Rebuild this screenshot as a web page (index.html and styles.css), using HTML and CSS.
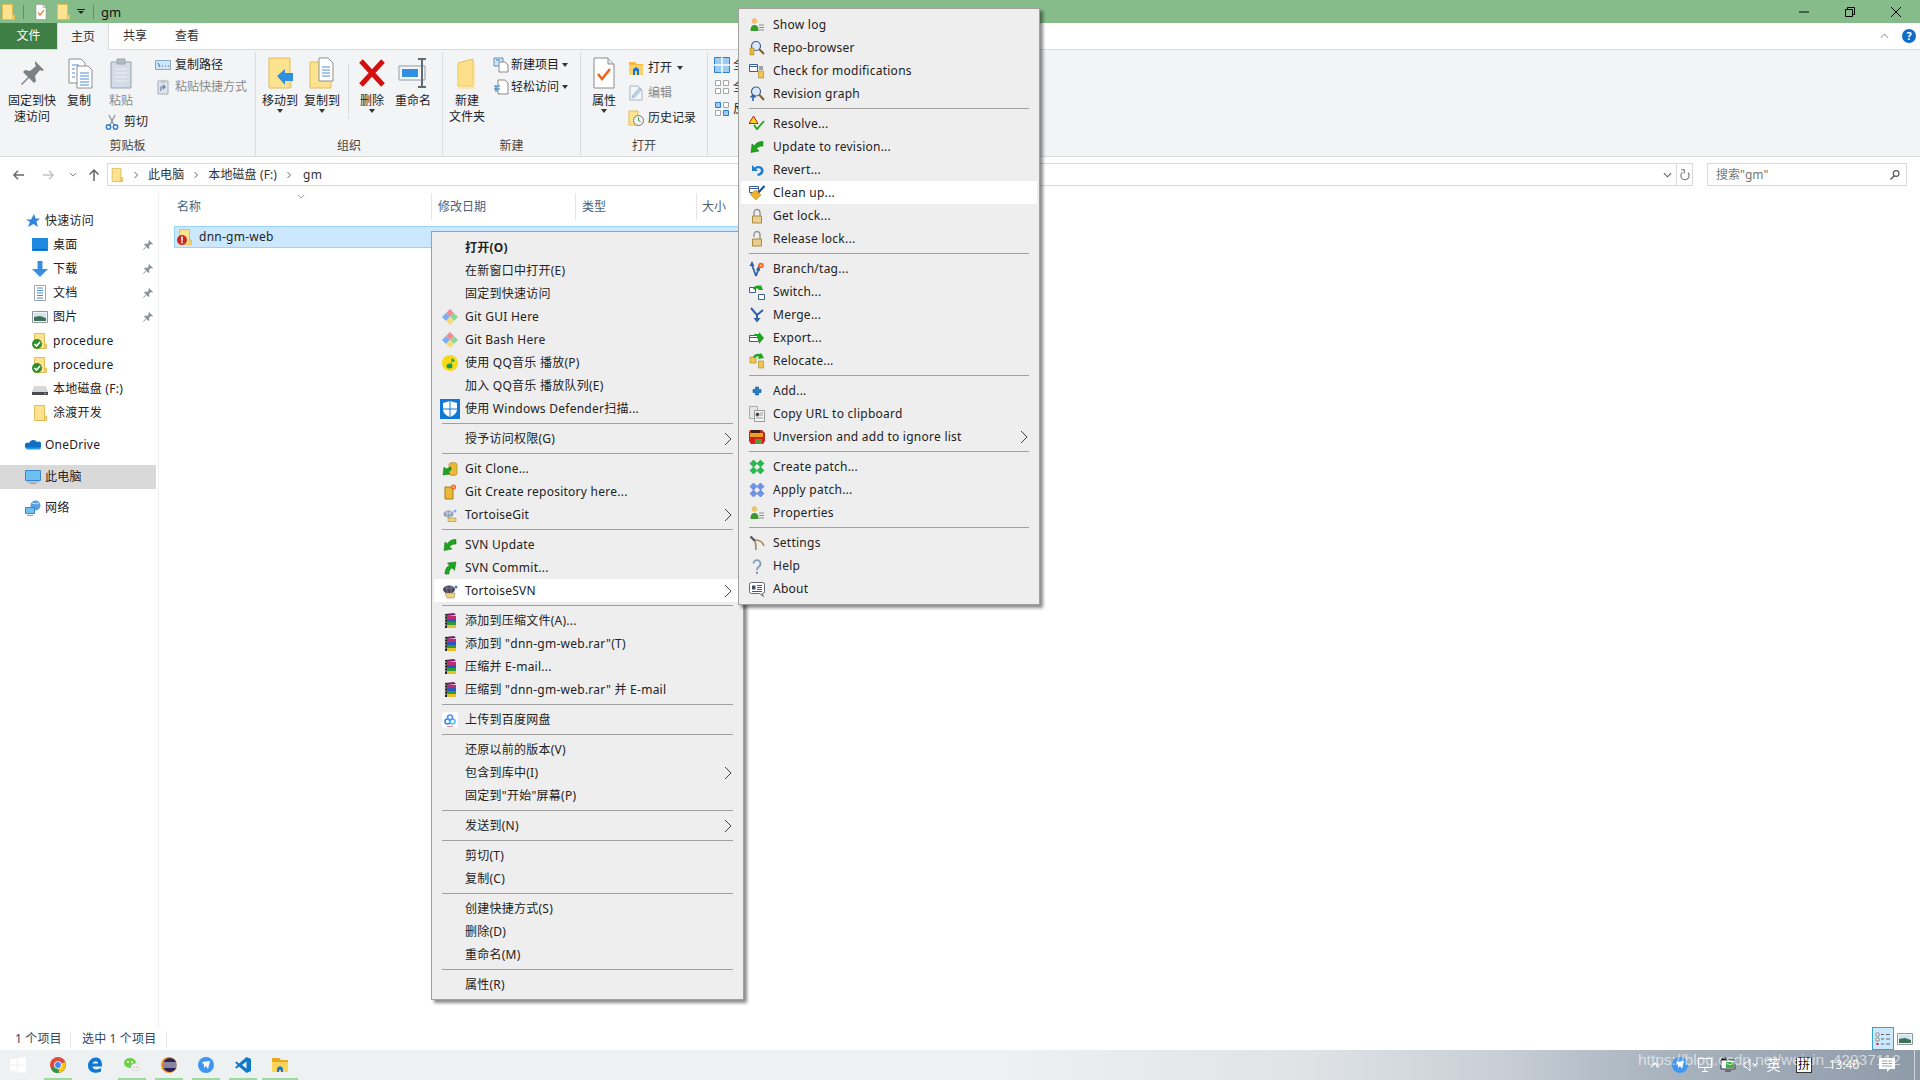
FILE: index.html
```html
<!DOCTYPE html>
<html lang="zh-CN">
<head>
<meta charset="utf-8">
<title>gm</title>
<link rel="stylesheet" href="styles.css">
</head>
<body>
<svg class="sprite" xmlns="http://www.w3.org/2000/svg">
<symbol id="folder" viewBox="0 0 16 16"><path d="M2.5.5h10v15h-10z" fill="#fde38f" stroke="#e2bd58"/><path d="M12.5 11h2v4.5h-2z" fill="#f9d776" stroke="#e2bd58"/></symbol>
<symbol id="ok" viewBox="0 0 16 16"><circle cx="5" cy="11" r="5" fill="#2f8f2f"/><path d="M2.5 11l2 2 3.5-4" fill="none" stroke="#fff" stroke-width="1.6"/></symbol>
<symbol id="err" viewBox="0 0 16 16"><circle cx="5" cy="11" r="5" fill="#c8281e"/><path d="M4.2 7.6h1.6v4.2H4.2zM4.2 12.6h1.6v1.6H4.2z" fill="#fff"/></symbol>
<symbol id="doc-check" viewBox="0 0 32 32"><path d="M6 1h14l6 6v24H6z" fill="#fff" stroke="#8a8a8a"/><path d="M20 1v6h6" fill="#e8e8e8" stroke="#8a8a8a"/><path d="M10 17l4 5 8-10" fill="none" stroke="#e8641b" stroke-width="2.4"/></symbol>
<symbol id="pin" viewBox="0 0 32 32"><path d="M19 4l9 9-2 1-2-1-5 6 1 5-2 2-5-5-7 7-1-1 7-7-5-5 2-2 5 1 6-5-1-2z" fill="#7c8186"/></symbol>
<symbol id="copy" viewBox="0 0 32 32"><path d="M6 2h12l4 4v20H6z" fill="#fff" stroke="#8f8f8f"/><path d="M14 9h11l4 4v18H14z" fill="#fff" stroke="#8f8f8f"/><path d="M9 8h7M9 12h3M9 16h3M9 20h3M17 16h9M17 19h9M17 22h9M17 25h9M17 28h9" stroke="#4d8ed4" stroke-width="1.2"/></symbol>
<symbol id="paste" viewBox="0 0 32 32"><path d="M6 5h20v26H6z" fill="#d3dbe6" stroke="#9aa3ad"/><path d="M12 2h8v5h-8z" fill="#b3bcc6" stroke="#9aa3ad"/><path d="M10 12h12M10 16h12M10 20h12M10 24h12" stroke="#eef1f4"/></symbol>
<symbol id="path" viewBox="0 0 16 16"><path d="M.5 3.5h15v9H.5z" fill="#cfe5f8" stroke="#89a8c4"/><path d="M3 6l2 4M7 9h1M10 9h1M13 9h1" stroke="#45617d"/></symbol>
<symbol id="shortcut" viewBox="0 0 16 16"><path d="M3 2h10v13H3z" fill="#dfe4ea" stroke="#a8b0ba"/><path d="M6 .8h4v3H6z" fill="#bcc4cc"/><path d="M6 12V8h4M8 6l2 2-2 2" fill="none" stroke="#5e7fa8" stroke-width="1.2"/></symbol>
<symbol id="cut" viewBox="0 0 16 16"><path d="M5 1l5 10M11 1L6 11" stroke="#8d9297" stroke-width="1.2"/><circle cx="4.5" cy="13" r="2.2" fill="none" stroke="#2d7fd0" stroke-width="1.4"/><circle cx="11.5" cy="13" r="2.2" fill="none" stroke="#2d7fd0" stroke-width="1.4"/></symbol>
<symbol id="move" viewBox="0 0 32 32"><path d="M5 1h21v30H5z" fill="#fde38f" stroke="#e2bd58"/><path d="M26 20h2v11h-2z" fill="#f9d776"/><path d="M13 19l8-7v4h8v8h-8v4z" fill="#2f8fe0"/></symbol>
<symbol id="copyto" viewBox="0 0 32 32"><path d="M4 5h21v26H4z" fill="#fde38f" stroke="#e2bd58"/><path d="M13 1h9l5 5v18H13z" fill="#fff" stroke="#8f8f8f"/><path d="M16 10h8M16 13h8M16 16h8M16 19h8" stroke="#4d8ed4"/></symbol>
<symbol id="del" viewBox="0 0 32 32"><path d="M5 4l22 24M27 4L5 28" stroke="#d30f0f" stroke-width="5"/></symbol>
<symbol id="rename" viewBox="0 0 32 32"><path d="M2 9h26v14H2z" fill="#f4f6f8" stroke="#8f99a3"/><path d="M5 12h16v8H5z" fill="#2f8fe0"/><path d="M25 3v26M21 2h8M21 30h8" stroke="#5f6a75" stroke-width="2"/></symbol>
<symbol id="newfolder" viewBox="0 0 32 32"><path d="M7 6l15-4v27H7z" fill="#fde38f" stroke="#e2bd58"/><path d="M7 6h17v26H7z" fill="#fbdc82" opacity=".5"/></symbol>
<symbol id="newitem" viewBox="0 0 16 16"><path d="M1 1h9v8H1z" fill="#cfe5f8" stroke="#6d8fae"/><path d="M6 5h6l3 3v7H6z" fill="#fff" stroke="#888"/><path d="M3 3h4" stroke="#2d7fd0"/></symbol>
<symbol id="easy" viewBox="0 0 16 16"><path d="M5 1h7l3 3v11H5z" fill="#fff" stroke="#888"/><path d="M1 7h6M1 10h6M3 7v6" stroke="#2d7fd0" stroke-width="1.2"/></symbol>
<symbol id="open" viewBox="0 0 16 16"><path d="M1 2h6l2 2h6v4H1z" fill="#f6b73c"/><path d="M1 5h14v10H1z" fill="#fbd36c"/><path d="M5 15V9l3-2 3 2v6H9v-4H7v4z" fill="#1678d2"/></symbol>
<symbol id="edit" viewBox="0 0 16 16"><path d="M2 1h8l4 4v10H2z" fill="#f4f6f8" stroke="#a9b4bf"/><path d="M4 13l1-3 6-7 2 2-6 7z" fill="#bcd2e8" stroke="#8ba7c2" stroke-width=".6"/></symbol>
<symbol id="history" viewBox="0 0 16 16"><path d="M1 1h9v14H1z" fill="#fde38f" stroke="#e2bd58"/><circle cx="10.5" cy="10.5" r="5" fill="#f2f2f2" stroke="#6f7f6f"/><path d="M10.5 7.5v3l2 1" fill="none" stroke="#3d8a3d"/></symbol>
<symbol id="selall" viewBox="0 0 16 16"><path d="M.5.5h15v15H.5z" fill="#9ecbf2" stroke="#2d7fd0"/><path d="M8 0v16M0 8h16" stroke="#fff" stroke-width="1.4"/></symbol>
<symbol id="selnone" viewBox="0 0 16 16"><path d="M1.500 1.500h5v5h-5zM9.500 1.500h5v5h-5zM1.500 9.500h5v5h-5zM9.500 9.500h5v5h-5z" fill="#fff" stroke="#a5a5a5"/></symbol>
<symbol id="selinv" viewBox="0 0 16 16"><path d="M1.500 9.500h5v5h-5zM9.500 1.500h5v5h-5z" fill="#fff" stroke="#a5a5a5"/><path d="M1.500 1.500h5v5h-5zM9.500 9.500h5v5h-5z" fill="#9ecbf2" stroke="#2d7fd0"/></symbol>
<symbol id="star" viewBox="0 0 16 16"><path d="M9 1l1.600 4.500H15l-3.500 3 1.400 5.500L8.500 11 3 14l2-5L1 6.500h5z" fill="#2f86dc"/></symbol>
<symbol id="desktop" viewBox="0 0 16 16"><path d="M0 1h16v13H0z" fill="#1c88e0"/><path d="M1 12h14v1H1z" fill="#0d5fa8"/></symbol>
<symbol id="down" viewBox="0 0 16 16"><path d="M5.500 0h5v8H16l-8 8-8-8h5.500z" fill="#3a8ee0"/></symbol>
<symbol id="docs" viewBox="0 0 16 16"><path d="M2.500.5h11v15h-11z" fill="#fff" stroke="#9aa5b1"/><path d="M5 3h6M5 5.500h6M5 8h6M5 10.500h6M5 13h6" stroke="#4d8ed4"/></symbol>
<symbol id="pics" viewBox="0 0 16 16"><path d="M.5 2.500h15v11h-15z" fill="#f2f5f7" stroke="#8f98a1"/><path d="M2 4h12v4H2z" fill="#cfe5f0"/><path d="M2 8l6-1 6 2v3H2z" fill="#3e7056"/></symbol>
<symbol id="drive" viewBox="0 0 16 16"><path d="M2 5h12l2 6H0z" fill="#d6d8da"/><path d="M0 11h16v3H0z" fill="#4a4d50"/><path d="M12 12h2v1h-2z" fill="#5ccf5c"/></symbol>
<symbol id="onedrive" viewBox="0 0 16 16"><path d="M4 6a4.500 4.500 0 0 1 8 -1 3 3 0 0 1 3 6H1a2.500 2.500 0 0 1 3 -5z" fill="#0f6fc4"/><path d="M1 10.500h15a2 2 0 0 1-2 2H2a2 2 0 0 1-1-2z" fill="#2a9ae8"/></symbol>
<symbol id="pc" viewBox="0 0 16 16"><path d="M.5 1.500h15v10H.5z" fill="#6fc0f2" stroke="#3a86c8"/><path d="M5 14.500h6M2 13h12" stroke="#8fa0b0"/></symbol>
<symbol id="net" viewBox="0 0 16 16"><circle cx="10.500" cy="5.500" r="5" fill="#5aa0dc"/><path d="M7 3c3 1 5 1 7 0" stroke="#cfe5f8" fill="none"/><path d="M.5 7.500h9v6h-9z" fill="#6fc0f2" stroke="#3a86c8"/><path d="M2 15.500h6" stroke="#8fa0b0"/></symbol>
<symbol id="git" viewBox="0 0 16 16"><path d="M4 4L8 8 4 12 0 8z" fill="#7aaef5"/><path d="M8 0L12 4 8 8 4 4z" fill="#f08a9a"/><path d="M12 4L16 8 12 12 8 8z" fill="#8fd69a"/><path d="M8 8L12 12 8 16 4 12z" fill="#f5dc7a"/></symbol>
<symbol id="qq" viewBox="0 0 16 16"><circle cx="8" cy="8" r="8" fill="#f7d917"/><ellipse cx="7.500" cy="11" rx="3" ry="2.500" fill="#1b9b4e"/><path d="M9.500 11V3l3 2v2l-2-1" fill="#1b9b4e"/></symbol>
<symbol id="defender" viewBox="0 0 20 20"><path d="M0 0h20v20H0z" fill="#0f78d4"/><path d="M10 2l7 2v6c0 4-3 6.500-7 8-4-1.500-7-4-7-8V4z" fill="#fff"/><path d="M10 2v16M3 10h14" stroke="#0f78d4" stroke-width="1"/></symbol>
<symbol id="gitclone" viewBox="0 0 16 16"><path d="M7 3.500a4 2 0 0 1 8 0v9a4 2 0 0 1-8 0z" fill="#e8b93a" stroke="#a87f15" stroke-width=".6"/><path d="M9 6L4 8 2 6 1 14l7-1-2-2 3-2z" fill="#1ea51e" stroke="#0c6b0c" stroke-width=".5"/></symbol>
<symbol id="gitcreate" viewBox="0 0 16 16"><path d="M3 3h8v12H3z" fill="#e8b93a" stroke="#a87f15"/><circle cx="11.500" cy="3" r="2.500" fill="#f0642a"/><circle cx="11.500" cy="3" r="1" fill="#ffe080"/></symbol>
<symbol id="tgit" viewBox="0 0 16 16"><ellipse cx="6.500" cy="7" rx="5" ry="3.500" fill="#8a9ab0"/><path d="M3 6h7M5 4v6M8 4v6" stroke="#dfe6ee" stroke-width=".7"/><circle cx="13" cy="4" r="1.500" fill="#7aaef5"/><path d="M6 11h8v3.500H6z" fill="#f0d37a" stroke="#8a7a40" stroke-width=".5"/></symbol>
<symbol id="tsvn" viewBox="0 0 16 16"><ellipse cx="7" cy="6.500" rx="6" ry="4" fill="#4a4560"/><path d="M3 5h8M5 3v7M9 3v7" stroke="#8a86a0" stroke-width=".7"/><circle cx="14" cy="4" r="1.500" fill="#3a7fc8"/><path d="M3 10h10l-1 5H5z" fill="#f0d37a" stroke="#8a7a40" stroke-width=".5"/></symbol>
<symbol id="svnup" viewBox="0 0 16 16"><path d="M14 2.500C9 2.500 6.500 4.500 5.500 7L3 5 2 13.500l8-1.500-2.500-2C8 8.500 10 7 14 7z" fill="#1ea51e" stroke="#0c6b0c" stroke-width=".5"/></symbol>
<symbol id="svnci" viewBox="0 0 16 16"><path d="M3 14C3 9 5 6.500 7.500 5.500L5.500 3l8.500-1-1.500 8.500-2-2.500C8.500 8.500 7 10 7 14z" fill="#1ea51e" stroke="#0c6b0c" stroke-width=".5"/></symbol>
<symbol id="rar" viewBox="0 0 16 16"><path d="M3 1l9-1 2 2-9 1z" fill="#7a1a6a"/><path d="M5 3h9v3H5z" fill="#c02a70"/><path d="M5 6h9v3H5z" fill="#2a56c0"/><path d="M5 9h9v3H5z" fill="#2a9a3a"/><path d="M5 12h9v3H5z" fill="#e8c02a"/><path d="M3 1h2v14H3z" fill="#222"/><path d="M1.500 3h3M1.500 6h3M1.500 9h3M1.500 12h3" stroke="#ddd"/></symbol>
<symbol id="baidu" viewBox="0 0 16 16"><path d="M0 3a3 3 0 0 1 3-3h10a3 3 0 0 1 3 3v10a3 3 0 0 1-3 3H3a3 3 0 0 1-3-3z" fill="#fff"/><circle cx="5.500" cy="9.500" r="2.500" fill="none" stroke="#3a7ff0" stroke-width="1.600"/><circle cx="10.500" cy="9.500" r="2.500" fill="none" stroke="#4abfe8" stroke-width="1.600"/><circle cx="8" cy="5.500" r="2.500" fill="none" stroke="#5a8ff5" stroke-width="1.600"/><path d="M5 14.500h6" stroke="#f08a9a"/></symbol>
<symbol id="showlog" viewBox="0 0 16 16"><circle cx="5.500" cy="4" r="2.800" fill="#f0c070"/><path d="M1.500 14c0-4.500 1.500-6 4-6s4 1.500 4 6z" fill="#3b9a2f"/><path d="M10 8h5M10 10.500h5M10 13h5" stroke="#8f8f8f"/></symbol>
<symbol id="repo" viewBox="0 0 16 16"><circle cx="7" cy="6" r="4.500" fill="#dbe8f5" stroke="#3a5f95" stroke-width="1.200"/><path d="M10 9l5 5" stroke="#8a5a1a" stroke-width="2"/><path d="M1 8h4v7H1z" fill="#e8b93a" stroke="#a87f15" stroke-width=".5"/></symbol>
<symbol id="check" viewBox="0 0 16 16"><path d="M.5 1.500h8v7h-8z" fill="#fff" stroke="#3a5f95"/><path d="M.5 3.500h8" stroke="#3a5f95"/><path d="M10 4h4M10 6h4" stroke="#555"/><path d="M9.500 8h5v7h-5z" fill="#f0c850" stroke="#a87f15" stroke-width=".6"/></symbol>
<symbol id="graph" viewBox="0 0 16 16"><circle cx="7" cy="5.500" r="4.500" fill="#dbe8f5" stroke="#3a5f95" stroke-width="1.200"/><path d="M10 8.500l5 5.500" stroke="#8a5a1a" stroke-width="2"/><path d="M4 15V9M1.500 11.500L4 9l2.500 2.500" fill="none" stroke="#2f62aa" stroke-width="1.600"/></symbol>
<symbol id="resolve" viewBox="0 0 16 16"><path d="M4.500 0L9 7.500H0z" fill="#f5d820" stroke="#e01010"/><path d="M5 9l3 4 7-8" fill="none" stroke="#1ea51e" stroke-width="1.800"/></symbol>
<symbol id="revert" viewBox="0 0 16 16"><path d="M3 3v6h6L7 7c2-1.500 4-1 5 1 0 2-1.500 3.500-4 4l1 2c4-.5 6-3 5.500-6.500C13.500 4 9 3 5.500 5.500z" fill="#1f7fd0"/></symbol>
<symbol id="clean" viewBox="0 0 16 16"><path d="M.5 1.500h9v6h-9z" fill="#fff" stroke="#3a5f95"/><path d="M.5 3.500h9" stroke="#3a5f95"/><path d="M15.500 1L9 8" stroke="#14509a" stroke-width="2"/><path d="M7 5l5 5-5 5-6-6z" fill="#f0b030" stroke="#b07a10" stroke-width=".5"/></symbol>
<symbol id="lock" viewBox="0 0 16 16"><path d="M5 8V4.500a3 3 0 0 1 6 0V8" fill="none" stroke="#909090" stroke-width="1.300"/><path d="M3.500 8h9v7h-9z" fill="#e8cf90" stroke="#a98a40"/></symbol>
<symbol id="unlock" viewBox="0 0 16 16"><path d="M5 6V3.500a3 3 0 0 1 6 0V8" fill="none" stroke="#909090" stroke-width="1.300"/><path d="M3.500 8h9v7h-9z" fill="#e8cf90" stroke="#a98a40"/></symbol>
<symbol id="branch" viewBox="0 0 16 16"><path d="M7 15L3 4M7 15l3-8" fill="none" stroke="#2f62aa" stroke-width="1.800"/><path d="M3 0L.5 5h5zM10 4L7 9l4 1z" fill="#2f62aa"/><circle cx="12" cy="4.500" r="2.800" fill="#f0642a"/><circle cx="12" cy="4.500" r="1" fill="#ffe080"/></symbol>
<symbol id="switch" viewBox="0 0 16 16"><path d="M.5 3.500h6v5h-6z" fill="#fff" stroke="#3a5f95"/><path d="M9.500 10.500h6v5h-6z" fill="#fff" stroke="#3a5f95"/><path d="M4 4c1-2 5-3 7-2l1-1 2 5-5 0 1-1c-2-1-4-.5-5 1z" fill="#1ea51e"/></symbol>
<symbol id="merge" viewBox="0 0 16 16"><path d="M2 1l6 7M14 3L8 8v5" fill="none" stroke="#2f62aa" stroke-width="2"/><path d="M4.500 11L8 15.500 11.500 11z" fill="#2f62aa"/></symbol>
<symbol id="export" viewBox="0 0 16 16"><path d="M.5 5.500h9v6h-9z" fill="#fff" stroke="#3a5f95"/><path d="M.5 7.500h9" stroke="#3a5f95"/><path d="M5 4h5V2l5 6-5 6v-3l-2-3V6H5z" fill="#1ea51e"/></symbol>
<symbol id="relocate" viewBox="0 0 16 16"><path d="M1 4h6v6H1z" fill="#f0c850" stroke="#a87f15" stroke-width=".6"/><path d="M9.500 8h5v7h-5z" fill="#f0c850" stroke="#a87f15" stroke-width=".6"/><path d="M4 4c1-3 5-4 7-3l1-1 3 5-6 1 1-2c-2-1-4 0-5 1z" fill="#1ea51e"/></symbol>
<symbol id="add" viewBox="0 0 16 16"><path d="M6.500 4h3v2.500H12v3H9.500V12h-3V9.500H4v-3h2.500z" fill="#1f7fd0" stroke="#0e4f88" stroke-width=".6"/></symbol>
<symbol id="copyurl" viewBox="0 0 16 16"><path d="M.5.500h8v12h-8z" fill="#e6e6e6" stroke="#aaa"/><path d="M5.500 4.500h10v11h-10z" fill="#f5f5f5" stroke="#999"/><path d="M7 7h3v3H7zM11 7h3M11 9h3M7 12h7" stroke="#9a9a9a"/></symbol>
<symbol id="unversion" viewBox="0 0 16 16"><path d="M1 1h12l3 3v5H0V3z" fill="#b03020"/><path d="M1 4h13v4H1z" fill="#f0a020"/><path d="M2 1h9v3H2z" fill="#402018"/><path d="M0 9h16v3l-2 3H2l-2-3z" fill="#d02020"/><path d="M6 10h7v5H6z" fill="#5a9a30"/></symbol>
<symbol id="cpatch" viewBox="0 0 16 16"><path d="M4.500 1L8 4.500 4.500 8 1 4.500zM11.500 1L15 4.500 11.500 8 8 4.500zM4.500 8L8 11.500 4.500 15 1 11.500zM11.500 8L15 11.500 11.500 15 8 11.500z" fill="#22c04a" stroke="#118030" stroke-width=".5"/></symbol>
<symbol id="apatch" viewBox="0 0 16 16"><path d="M4.500 1L8 4.500 4.500 8 1 4.500zM11.500 1L15 4.500 11.500 8 8 4.500zM4.500 8L8 11.500 4.500 15 1 11.500zM11.500 8L15 11.500 11.500 15 8 11.500z" fill="#6f93ea" stroke="#3a5fc0" stroke-width=".5"/></symbol>
<symbol id="settings" viewBox="0 0 16 16"><path d="M1.500 1.500L6 6" stroke="#556" stroke-width="2.400"/><path d="M6 5c5 0 8 3 9 6M6 6c1 3 1 6 1 9" fill="none" stroke="#a8864a" stroke-width="1.600"/></symbol>
<symbol id="help" viewBox="0 0 16 16"><path d="M4.500 5.500a3.500 3.500 0 1 1 5.500 3C8.800 9.300 8 10 8 12" fill="none" stroke="#7f9cb8" stroke-width="1.800"/><path d="M7 13.500h2V16H7z" fill="#7f9cb8"/></symbol>
<symbol id="about" viewBox="0 0 16 16"><path d="M2.500 1.500h11a2 2 0 0 1 2 2v7a2 2 0 0 1-2 2H13l1.500 3-4-3h-8a2 2 0 0 1-2-2v-7a2 2 0 0 1 2-2z" fill="#fff" stroke="#667"/><path d="M3 4.500h3.500v4H3z" fill="#3a4f6a"/><path d="M8 4.500h5M8 6.500h5M8 8.500h5M3 10.500h10" stroke="#556"/></symbol>
<symbol id="win" viewBox="0 0 16 16"><path d="M0 2.200l6.800-1v6.300H0zM7.700 1l8.300-1v7.500H7.700zM0 8.500h6.800v6.300L0 13.800zM7.700 8.500H16V16l-8.300-1.100z" fill="#fff"/></symbol>
<symbol id="chrome" viewBox="0 0 16 16"><circle cx="8" cy="8" r="8" fill="#dd4b3e"/><path d="M8 8L1 12a8 8 0 0 0 8 4z" fill="#1e9e4a"/><path d="M8 8l7-3a8 8 0 0 1-6 11z" fill="#f5c518"/><circle cx="8" cy="8" r="3.800" fill="#fff"/><circle cx="8" cy="8" r="2.900" fill="#4285f4"/></symbol>
<symbol id="edge" viewBox="0 0 16 16"><path d="M1 9C1 3 6 0 9.500 .5 13.500 1 15.500 5 15 9.500H5.500c.3 3 4.500 4 8.500 1.500v3.500c-6 3-13 .5-13-5.500zm4.500-2.500H11C11 3.500 6.500 3.500 5.500 6.500z" fill="#0f78d4"/></symbol>
<symbol id="wechat" viewBox="0 0 16 16"><ellipse cx="6" cy="6" rx="6" ry="5" fill="#6fcf4a"/><circle cx="4" cy="5" r=".9" fill="#fff"/><circle cx="8" cy="5" r=".9" fill="#fff"/><ellipse cx="11.500" cy="10" rx="4.500" ry="3.600" fill="#f0f0f0" stroke="#ccc" stroke-width=".5"/><circle cx="10" cy="10" r=".6" fill="#888"/><circle cx="13" cy="10" r=".6" fill="#888"/></symbol>
<symbol id="eclipse" viewBox="0 0 16 16"><circle cx="8" cy="8" r="8" fill="#f7941e"/><circle cx="8.800" cy="8" r="7" fill="#2c2255"/><path d="M2 6h14M2 8h14M2 10h14" stroke="#fff" stroke-width=".9"/></symbol>
<symbol id="feather" viewBox="0 0 16 16"><circle cx="8" cy="8" r="8" fill="#3f97f2"/><path d="M4 5l8-1-2 8-2-3-2 2V8z" fill="#fff"/></symbol>
<symbol id="vscode" viewBox="0 0 16 16"><path d="M11.500 0L16 2v12l-4.500 2L4 9.500 1.500 11.500 0 10.500 2.500 8 0 5.500 1.500 4.500 4 6.500zM11.500 4.500L7 8l4.500 3.500z" fill="#0f7ac8"/></symbol>
<symbol id="explorer" viewBox="0 0 16 16"><path d="M0 1h7l2 2h7v5H0z" fill="#e8a820"/><path d="M0 5h16v10H0z" fill="#fcd45a"/><path d="M5 15v-4l3-2 3 2v4H9v-2H7v2z" fill="#1678d2"/></symbol>
<symbol id="monitor" viewBox="0 0 16 16"><path d="M1.500 1.500h13v9h-13zM5 14.500h6M8 10.500v4" fill="none" stroke="#fff"/></symbol>
<symbol id="tnet" viewBox="0 0 16 16"><path d="M1 3h14v9H1z" fill="#fff" stroke="#333"/><path d="M6 5h8v6H6z" fill="#3fb04a"/><path d="M2 3V1h4v2M5 14h6" stroke="#333"/></symbol>
<symbol id="vol" viewBox="0 0 16 16"><path d="M1 6h2l4-4v12l-4-4H1zM10 6l4 4M14 6l-4 4" fill="none" stroke="#fff"/></symbol>
<symbol id="notif" viewBox="0 0 16 16"><path d="M0 1h16v11h-5l-3 3v-3H0z" fill="#fff"/><path d="M3 4h10M3 6.500h10M3 9h10" stroke="#9aa5b0"/></symbol>
<symbol id="list-view" viewBox="0 0 16 16"><path d="M1 2h3v3H1zM1 7h3v3H1z" fill="#fff" stroke="#666" stroke-width=".7"/><path d="M1.500 12h2v2h-2z" fill="#d02020"/><path d="M6 3.500h3M11 3.500h4M6 8h3M11 8h4M6 13h3M11 13h4" stroke="#666"/></symbol>
<symbol id="search" viewBox="0 0 16 16"><circle cx="9.500" cy="6" r="3.800" fill="none" stroke="#555" stroke-width="1.500"/><path d="M7 9l-5 5" stroke="#555" stroke-width="2"/></symbol>
<symbol id="refresh" viewBox="0 0 16 16"><path d="M12 5a5.500 5.500 0 1 1-7.500-.5" fill="none" stroke="#777" stroke-width="1.500"/><path d="M3 1h4v5" fill="none" stroke="#777" stroke-width="1.500"/></symbol>
<symbol id="sm-pin" viewBox="0 0 12 12"><path d="M7 1l4 4-1 .5-1-.5-2 2 .5 2-1 1-2-2-3 3-.5-.5 3-3-2-2 1-1 2 .5 2-2-.5-1z" fill="#8d949b"/></symbol>
<symbol id="chev" viewBox="0 0 8 14"><path d="M1 1l6 6-6 6" fill="none" stroke="#3c4650"/></symbol>
<symbol id="crumb" viewBox="0 0 8 8"><path d="M2.500 1l3 3-3 3" fill="none" stroke="#666"/></symbol>
<symbol id="arr-left" viewBox="0 0 14 12"><path d="M13 6H2M6.500 1.500L2 6l4.500 4.500" fill="none" stroke="currentColor" stroke-width="1.500"/></symbol>
<symbol id="arr-up" viewBox="0 0 12 14"><path d="M6 13V2M1.500 6.500L6 2l4.500 4.500" fill="none" stroke="currentColor" stroke-width="1.500"/></symbol>
<symbol id="vee" viewBox="0 0 10 6"><path d="M1 1l4 4 4-4" fill="none" stroke="currentColor" stroke-width="1.200"/></symbol>
</svg>

<header class="titlebar">
  <svg class="tq"><use href="#folder"/></svg>
  <span class="tq-sep"></span>
  <svg class="tq tq-doc"><use href="#doc-check"/></svg>
  <svg class="tq tq-f2"><use href="#folder"/></svg>
  <span class="tq-drop"></span>
  <span class="tq-sep tq-sep2"></span>
  <span class="title-text">gm</span>
  <div class="winctl">
    <span class="winbtn"><svg viewBox="0 0 10 10" class="wi"><path d="M0 5h10" stroke="#000"/></svg></span>
    <span class="winbtn"><svg viewBox="0 0 10 10" class="wi"><path d="M.5 2.500h7v7h-7zM2.500 2.500v-2h7v7h-2" fill="none" stroke="#000"/></svg></span>
    <span class="winbtn"><svg viewBox="0 0 10 10" class="wi"><path d="M0 0l10 10M10 0L0 10" stroke="#000"/></svg></span>
  </div>
</header>

<nav class="tabs">
  <span class="tab tab-file">文件</span>
  <span class="tab tab-on">主页</span>
  <span class="tab">共享</span>
  <span class="tab">查看</span>
  <div class="tabs-right">
    <svg class="collapse"><use href="#vee"/></svg>
    <span class="helpdot">?</span>
  </div>
</nav>

<section class="ribbon">
  <div class="group g1">
    <div class="g-body">
      <div class="big w48"><svg class="bigic"><use href="#pin"/></svg><span class="bl">固定到快<br>速访问</span></div>
      <div class="big ml3"><svg class="bigic"><use href="#copy"/></svg><span class="bl">复制</span></div>
      <div class="big ml2 dim"><svg class="bigic"><use href="#paste"/></svg><span class="bl">粘贴</span>
        <div class="sm cutrow"><svg class="smic"><use href="#cut"/></svg><span class="undim">剪切</span></div>
      </div>
      <div class="col ml14">
        <div class="sm"><svg class="smic"><use href="#path"/></svg><span>复制路径</span></div>
        <div class="sm dim"><svg class="smic"><use href="#shortcut"/></svg><span>粘贴快捷方式</span></div>
      </div>
    </div>
    <div class="g-label">剪贴板</div>
  </div>
  <div class="group g2">
    <div class="g-body">
      <div class="big ml4"><svg class="bigic"><use href="#move"/></svg><span class="bl">移动到</span><i class="drop"></i></div>
      <div class="big ml2"><svg class="bigic"><use href="#copyto"/></svg><span class="bl">复制到</span><i class="drop"></i></div>
      <span class="rsep"></span>
      <div class="big"><svg class="bigic"><use href="#del"/></svg><span class="bl">删除</span><i class="drop"></i></div>
      <div class="big ml1"><svg class="bigic"><use href="#rename"/></svg><span class="bl">重命名</span></div>
    </div>
    <div class="g-label">组织</div>
  </div>
  <div class="group g3">
    <div class="g-body">
      <div class="big ml4"><svg class="bigic"><use href="#newfolder"/></svg><span class="bl">新建<br>文件夹</span></div>
      <div class="col ml6">
        <div class="sm tight"><svg class="smic"><use href="#newitem"/></svg><span>新建项目</span><i class="drop drop-r"></i></div>
        <div class="sm tight"><svg class="smic"><use href="#easy"/></svg><span>轻松访问</span><i class="drop drop-r"></i></div>
      </div>
    </div>
    <div class="g-label">新建</div>
  </div>
  <div class="group g4">
    <div class="g-body">
      <div class="big ml3"><svg class="bigic"><use href="#doc-check"/></svg><span class="bl">属性</span><i class="drop"></i></div>
      <div class="col ml4 col-open">
        <div class="sm r25"><svg class="smic"><use href="#open"/></svg><span>打开</span><i class="drop drop-r"></i></div>
        <div class="sm r25 dim"><svg class="smic"><use href="#edit"/></svg><span>编辑</span></div>
        <div class="sm r25"><svg class="smic"><use href="#history"/></svg><span>历史记录</span></div>
      </div>
    </div>
    <div class="g-label">打开</div>
  </div>
  <div class="group g5">
    <div class="g-body">
      <div class="col ml6">
        <div class="sm s3"><svg class="smic"><use href="#selall"/></svg><span>全部选择</span></div>
        <div class="sm s3"><svg class="smic"><use href="#selnone"/></svg><span>全部取消</span></div>
        <div class="sm s3"><svg class="smic"><use href="#selinv"/></svg><span>反向选择</span></div>
      </div>
    </div>
  </div>
</section>

<section class="addr">
  <svg class="nav nav-back"><use href="#arr-left"/></svg>
  <svg class="nav nav-fwd"><use href="#arr-left"/></svg>
  <svg class="nav nav-down"><use href="#vee"/></svg>
  <svg class="nav nav-up"><use href="#arr-up"/></svg>
  <div class="addrbox">
    <svg class="crumb-folder"><use href="#folder"/></svg>
    <svg class="crumb"><use href="#crumb"/></svg><span>此电脑</span>
    <svg class="crumb"><use href="#crumb"/></svg><span>本地磁盘 (F:)</span>
    <svg class="crumb"><use href="#crumb"/></svg><span class="crumb-last">gm</span>
    <svg class="addr-vee"><use href="#vee"/></svg>
    <span class="refresh"><svg class="refresh-ic"><use href="#refresh"/></svg></span>
  </div>
  <div class="searchbox"><span>搜索"gm"</span><svg class="search-ic"><use href="#search"/></svg></div>
</section>

<main class="main">
  <aside class="sidebar">
    <div class="srow top"><svg class="sic"><use href="#star"/></svg><span>快速访问</span></div>
    <div class="srow sub"><svg class="sic"><use href="#desktop"/></svg><span>桌面</span><svg class="spin"><use href="#sm-pin"/></svg></div>
    <div class="srow sub"><svg class="sic"><use href="#down"/></svg><span>下载</span><svg class="spin"><use href="#sm-pin"/></svg></div>
    <div class="srow sub"><svg class="sic"><use href="#docs"/></svg><span>文档</span><svg class="spin"><use href="#sm-pin"/></svg></div>
    <div class="srow sub"><svg class="sic"><use href="#pics"/></svg><span>图片</span><svg class="spin"><use href="#sm-pin"/></svg></div>
    <div class="srow sub"><span class="sstack"><svg class="sic"><use href="#folder"/></svg><svg class="sic over"><use href="#ok"/></svg></span><span>procedure</span></div>
    <div class="srow sub"><span class="sstack"><svg class="sic"><use href="#folder"/></svg><svg class="sic over"><use href="#ok"/></svg></span><span>procedure</span></div>
    <div class="srow sub"><svg class="sic"><use href="#drive"/></svg><span>本地磁盘 (F:)</span></div>
    <div class="srow sub"><svg class="sic"><use href="#folder"/></svg><span>涂渡开发</span></div>
    <div class="srow top s-od"><svg class="sic"><use href="#onedrive"/></svg><span>OneDrive</span></div>
    <div class="srow top s-pc"><svg class="sic"><use href="#pc"/></svg><span>此电脑</span></div>
    <div class="srow top s-net"><svg class="sic"><use href="#net"/></svg><span>网络</span></div>
  </aside>
  <div class="content">
    <div class="thead">
      <div class="th th-name"><span>名称</span><svg class="sort"><use href="#vee"/></svg></div>
      <div class="th th-date">修改日期</div>
      <div class="th th-type">类型</div>
      <div class="th th-size">大小</div>
    </div>
    <div class="filerow"><span class="sstack"><svg class="sic"><use href="#folder"/></svg><svg class="sic over"><use href="#err"/></svg></span><span>dnn-gm-web</span></div>
  </div>
</main>

<footer class="status">
  <span class="st st1">1 个项目</span>
  <span class="st st2">选中 1 个项目</span>
  <div class="views">
    <span class="vbtn on"><svg class="vic"><use href="#list-view"/></svg></span>
    <span class="vbtn"><svg class="vic"><use href="#pics"/></svg></span>
  </div>
</footer>

<div class="taskbar">
  <span class="tb-start"><svg class="tbi"><use href="#win"/></svg></span>
  <span class="tb on"><svg class="tbi"><use href="#chrome"/></svg></span>
  <span class="tb"><svg class="tbi"><use href="#edge"/></svg></span>
  <span class="tb on"><svg class="tbi"><use href="#wechat"/></svg></span>
  <span class="tb on"><svg class="tbi"><use href="#eclipse"/></svg></span>
  <span class="tb on"><svg class="tbi"><use href="#feather"/></svg></span>
  <span class="tb on"><svg class="tbi"><use href="#vscode"/></svg></span>
  <span class="tb on wide"><svg class="tbi"><use href="#explorer"/></svg></span>
  <div class="tray">
    <span class="tc caret"><svg class="caret-ic"><use href="#vee"/></svg></span>
    <span class="tc"><svg class="tri"><use href="#feather"/></svg></span>
    <span class="tc"><svg class="tri"><use href="#monitor"/></svg></span>
    <span class="tc"><svg class="tri"><use href="#tnet"/></svg></span>
    <span class="tc"><svg class="tri"><use href="#vol"/></svg></span>
    <span class="tc t-en">英</span>
    <span class="tc"><span class="t-pin">拼</span></span>
    <span class="tc t-time">13:40</span>
    <span class="tc"><svg class="tri"><use href="#notif"/></svg></span>
    <span class="tc t-line"></span>
  </div>
  <div class="watermark">https://blog.csdn.net/weixin_42937112</div>
</div>

<div class="menu menu-a">
  <div class="mi bold"><span class="mic"></span>打开(O)</div>
  <div class="mi"><span class="mic"></span>在新窗口中打开(E)</div>
  <div class="mi"><span class="mic"></span>固定到快速访问</div>
  <div class="mi"><span class="mic"><svg class="mg"><use href="#git"/></svg></span>Git GUI Here</div>
  <div class="mi"><span class="mic"><svg class="mg"><use href="#git"/></svg></span>Git Bash Here</div>
  <div class="mi"><span class="mic"><svg class="mg"><use href="#qq"/></svg></span>使用 QQ音乐 播放(P)</div>
  <div class="mi"><span class="mic"></span>加入 QQ音乐 播放队列(E)</div>
  <div class="mi"><span class="mic"><svg class="mg mg-l"><use href="#defender"/></svg></span>使用 Windows Defender扫描...</div>
  <div class="msep"></div>
  <div class="mi"><span class="mic"></span>授予访问权限(G)<svg class="more"><use href="#chev"/></svg></div>
  <div class="msep"></div>
  <div class="mi"><span class="mic"><svg class="mg"><use href="#gitclone"/></svg></span>Git Clone...</div>
  <div class="mi"><span class="mic"><svg class="mg"><use href="#gitcreate"/></svg></span>Git Create repository here...</div>
  <div class="mi"><span class="mic"><svg class="mg"><use href="#tgit"/></svg></span>TortoiseGit<svg class="more"><use href="#chev"/></svg></div>
  <div class="msep"></div>
  <div class="mi"><span class="mic"><svg class="mg"><use href="#svnup"/></svg></span>SVN Update</div>
  <div class="mi"><span class="mic"><svg class="mg"><use href="#svnci"/></svg></span>SVN Commit...</div>
  <div class="mi hot"><span class="mic"><svg class="mg"><use href="#tsvn"/></svg></span>TortoiseSVN<svg class="more"><use href="#chev"/></svg></div>
  <div class="msep"></div>
  <div class="mi"><span class="mic"><svg class="mg"><use href="#rar"/></svg></span>添加到压缩文件(A)...</div>
  <div class="mi"><span class="mic"><svg class="mg"><use href="#rar"/></svg></span>添加到 "dnn-gm-web.rar"(T)</div>
  <div class="mi"><span class="mic"><svg class="mg"><use href="#rar"/></svg></span>压缩并 E-mail...</div>
  <div class="mi"><span class="mic"><svg class="mg"><use href="#rar"/></svg></span>压缩到 "dnn-gm-web.rar" 并 E-mail</div>
  <div class="msep"></div>
  <div class="mi"><span class="mic"><svg class="mg"><use href="#baidu"/></svg></span>上传到百度网盘</div>
  <div class="msep"></div>
  <div class="mi"><span class="mic"></span>还原以前的版本(V)</div>
  <div class="mi"><span class="mic"></span>包含到库中(I)<svg class="more"><use href="#chev"/></svg></div>
  <div class="mi"><span class="mic"></span>固定到"开始"屏幕(P)</div>
  <div class="msep"></div>
  <div class="mi"><span class="mic"></span>发送到(N)<svg class="more"><use href="#chev"/></svg></div>
  <div class="msep"></div>
  <div class="mi"><span class="mic"></span>剪切(T)</div>
  <div class="mi"><span class="mic"></span>复制(C)</div>
  <div class="msep"></div>
  <div class="mi"><span class="mic"></span>创建快捷方式(S)</div>
  <div class="mi"><span class="mic"></span>删除(D)</div>
  <div class="mi"><span class="mic"></span>重命名(M)</div>
  <div class="msep"></div>
  <div class="mi"><span class="mic"></span>属性(R)</div>
</div>

<div class="menu menu-b">
  <div class="mi"><span class="mic"><svg class="mg"><use href="#showlog"/></svg></span>Show log</div>
  <div class="mi"><span class="mic"><svg class="mg"><use href="#repo"/></svg></span>Repo-browser</div>
  <div class="mi"><span class="mic"><svg class="mg"><use href="#check"/></svg></span>Check for modifications</div>
  <div class="mi"><span class="mic"><svg class="mg"><use href="#graph"/></svg></span>Revision graph</div>
  <div class="msep"></div>
  <div class="mi"><span class="mic"><svg class="mg"><use href="#resolve"/></svg></span>Resolve...</div>
  <div class="mi"><span class="mic"><svg class="mg"><use href="#svnup"/></svg></span>Update to revision...</div>
  <div class="mi"><span class="mic"><svg class="mg"><use href="#revert"/></svg></span>Revert...</div>
  <div class="mi hot"><span class="mic"><svg class="mg"><use href="#clean"/></svg></span>Clean up...</div>
  <div class="mi"><span class="mic"><svg class="mg"><use href="#lock"/></svg></span>Get lock...</div>
  <div class="mi"><span class="mic"><svg class="mg"><use href="#unlock"/></svg></span>Release lock...</div>
  <div class="msep"></div>
  <div class="mi"><span class="mic"><svg class="mg"><use href="#branch"/></svg></span>Branch/tag...</div>
  <div class="mi"><span class="mic"><svg class="mg"><use href="#switch"/></svg></span>Switch...</div>
  <div class="mi"><span class="mic"><svg class="mg"><use href="#merge"/></svg></span>Merge...</div>
  <div class="mi"><span class="mic"><svg class="mg"><use href="#export"/></svg></span>Export...</div>
  <div class="mi"><span class="mic"><svg class="mg"><use href="#relocate"/></svg></span>Relocate...</div>
  <div class="msep"></div>
  <div class="mi"><span class="mic"><svg class="mg"><use href="#add"/></svg></span>Add...</div>
  <div class="mi"><span class="mic"><svg class="mg"><use href="#copyurl"/></svg></span>Copy URL to clipboard</div>
  <div class="mi"><span class="mic"><svg class="mg"><use href="#unversion"/></svg></span>Unversion and add to ignore list<svg class="more"><use href="#chev"/></svg></div>
  <div class="msep"></div>
  <div class="mi"><span class="mic"><svg class="mg"><use href="#cpatch"/></svg></span>Create patch...</div>
  <div class="mi"><span class="mic"><svg class="mg"><use href="#apatch"/></svg></span>Apply patch...</div>
  <div class="mi"><span class="mic"><svg class="mg"><use href="#showlog"/></svg></span>Properties</div>
  <div class="msep"></div>
  <div class="mi"><span class="mic"><svg class="mg"><use href="#settings"/></svg></span>Settings</div>
  <div class="mi"><span class="mic"><svg class="mg"><use href="#help"/></svg></span>Help</div>
  <div class="mi"><span class="mic"><svg class="mg"><use href="#about"/></svg></span>About</div>
</div>
</body>
</html>
```

FILE: styles.css
```css
* { box-sizing: border-box; }
html, body { margin: 0; height: 100%; }
body {
  width: 1920px; height: 1080px; overflow: hidden; position: relative;
  display: flex; flex-direction: column; background: #fff; color: #222;
  font: 12px/16px "Noto Sans", "Noto Sans CJK SC", sans-serif;
}
.sprite { position: absolute; width: 0; height: 0; }
svg { display: block; flex: none; }

/* title bar */
.titlebar { height: 23px; flex: none; background: #86bc8a; display: flex; align-items: center; }
.tq { width: 16px; height: 16px; }
.tq-sep { width: 1px; height: 14px; background: #5f8f63; margin-left: 7px; }
.tq-doc { margin-left: 9px; }
.tq-f2 { margin-left: 6px; }
.tq-drop { width: 8px; height: 5px; margin-left: 6px; border-top: 1px solid #222; position: relative; }
.tq-drop::after { content: ""; position: absolute; left: 1px; top: 1px; border: 3px solid transparent; border-top-color: #222; }
.tq-sep2 { margin-left: 8px; }
.title-text { color: #111; font-size: 13px; margin-left: 7px; }
.winctl { margin-left: auto; display: flex; margin-right: 1px; }
.winbtn { width: 46px; height: 20px; display: flex; align-items: center; justify-content: center; }
.wi { width: 10px; height: 10px; }

/* tabs */
.tabs { height: 26px; flex: none; display: flex; align-items: stretch; background: #fff; }
.tab { width: 52px; display: flex; align-items: center; justify-content: center; color: #333; }
.tab-file { width: 57px; background: #3f7f46; color: #fff; }
.tab-on { background: #f3f4f6; border: 1px solid #dadbdc; border-width: 0 1px; margin-bottom: -1px; position: relative; }
.tabs-right { margin-left: auto; display: flex; align-items: center; padding-right: 4px; }
.collapse { width: 9px; height: 6px; color: #a5a5a5; transform: rotate(180deg); margin-right: 13px; }
.helpdot { width: 14px; height: 14px; border-radius: 50%; background: #0f6cc8; color: #fff; font-size: 11px; font-weight: 700; line-height: 14px; text-align: center; }

/* ribbon */
.ribbon { height: 108px; flex: none; background: #f3f4f6; border-top: 1px solid #dadbdc; border-bottom: 1px solid #dadbdc; display: flex; overflow: hidden; }
.group { height: 104px; margin-top: 2px; display: flex; flex-direction: column; border-right: 1px solid #dcdddf; flex: none; }
.g1 { width: 256px; }
.g1 .g-body { padding-left: 8px; }
.g2 { width: 187px; }
.g3 { width: 138px; }
.g4 { width: 127px; }
.g5 { flex: 1; border: 0; }
.g-body { height: 85px; display: flex; padding-top: 2px; }
.g-label { height: 16px; text-align: center; color: #444; margin-top: 1px; }
.big { width: 40px; display: flex; flex-direction: column; align-items: center; padding-top: 3px; flex: none; }
.w48 { width: 48px; }
.bigic { width: 32px; height: 32px; }
.bl { margin-top: 4px; line-height: 16px; text-align: center; white-space: nowrap; }
.drop { display: block; width: 0; height: 0; border: 3px solid transparent; border-top: 4px solid #333; border-bottom: 0; }
.drop-r { margin-left: 1px; }
.ml1 { margin-left: 1px; } .ml2 { margin-left: 2px; } .ml3 { margin-left: 3px; } .ml4 { margin-left: 4px; } .ml6 { margin-left: 6px; } .ml14 { margin-left: 14px; }
.rsep { width: 1px; height: 55px; background: #dcdddf; margin: 10px 3px 0 6px; flex: none; }
.col { display: flex; flex-direction: column; }
.col-open { padding-top: 1px; }
.sm { height: 22px; display: flex; align-items: center; white-space: nowrap; gap: 4px; }
.sm.tight { gap: 2px; }
.sm.r25 { height: 25px; }
.sm.s3 { gap: 3px; }
.smic { width: 16px; height: 16px; }
.dim { color: #8a8a8a; }
.undim { color: #222; }
.cutrow { margin-top: 2px; margin-left: 3px; align-self: flex-start; }

/* address row */
.addr { height: 36px; flex: none; display: grid; grid-template-columns: 24px 36px 14px 27px 1fr 214px; align-items: center; padding: 5px 13px 6px 6px; }
.nav { justify-self: center; color: #666; }
.nav-back { width: 13px; height: 12px; }
.nav-fwd { width: 13px; height: 12px; color: #c4c4c4; transform: scaleX(-1); }
.nav-down { width: 8px; height: 5px; color: #777; }
.nav-up { width: 12px; height: 14px; }
.addrbox { height: 23px; border: 1px solid #d9d9d9; display: flex; align-items: center; padding-left: 3px; color: #333; letter-spacing: .1px; }
.crumb-folder { width: 14px; height: 16px; margin-left: -1px; }
.crumb { width: 8px; height: 8px; margin: 0 8px; }
.crumb-last { margin-left: 2px; letter-spacing: .4px; }
.addr-vee { width: 9px; height: 6px; color: #555; margin-left: auto; margin-right: 4px; }
.refresh { width: 16px; height: 21px; border-left: 1px solid #d9d9d9; display: flex; align-items: center; justify-content: center; }
.refresh-ic { width: 12px; height: 12px; }
.searchbox { height: 23px; width: 200px; justify-self: end; border: 1px solid #d9d9d9; display: flex; align-items: center; padding: 0 5px 0 8px; color: #777; }
.search-ic { width: 12px; height: 12px; margin-left: auto; }

/* main */
.main { flex: 1; display: flex; min-height: 0; }
.sidebar { width: 159px; flex: none; padding-top: 16px; border-right: 1px solid #f0f0f0; letter-spacing: .25px; }
.srow { height: 24px; width: 156px; display: flex; align-items: center; white-space: nowrap; }
.top { padding-left: 25px; gap: 4px; }
.sub { padding-left: 32px; gap: 5px; }
.sic { width: 16px; height: 16px; }
.spin { width: 12px; height: 12px; margin-left: auto; margin-right: 2px; }
.sstack { position: relative; width: 16px; height: 16px; flex: none; }
.over { position: absolute; left: 0; top: 0; }
.s-od { margin-top: 8px; }
.s-pc { margin-top: 8px; background: #d9d9d9; }
.s-net { margin-top: 7px; }
.content { flex: 1; min-width: 0; }
.thead { height: 27px; display: flex; color: #4c607a; }
.th { height: 27px; display: flex; align-items: center; border-right: 1px solid #e5e5e5; flex: none; }
.th-name { width: 273px; padding-left: 18px; }
.sort { width: 8px; height: 5px; color: #999; margin-left: 96px; margin-top: -21px; }
.th-date { width: 144px; padding-left: 6px; }
.th-type { width: 121px; padding-left: 6px; }
.th-size { padding-left: 5px; width: 60px; border-right: 0; }
.filerow { margin: 6px 0 0 15px; height: 22px; width: 566px; background: #cce8ff; border: 1px solid #99d1ff; display: flex; align-items: center; padding-left: 2px; gap: 6px; letter-spacing: .25px; }

/* status */
.status { height: 23px; flex: none; display: flex; align-items: center; padding-left: 15px; color: #2f4560; letter-spacing: .15px; }
.st { height: 16px; }
.st1 { width: 56px; border-right: 1px solid #e8e8e8; }
.st2 { margin-left: 11px; width: 85px; border-right: 1px solid #e8e8e8; }
.views { margin-left: auto; display: flex; padding-right: 4px; }
.vbtn { width: 22px; height: 23px; display: flex; align-items: center; justify-content: center; border: 1px solid transparent; }
.vbtn.on { background: #cce8ff; border-color: #3aa0d0; }
.vic { width: 16px; height: 16px; }

/* taskbar */
.taskbar { height: 30px; flex: none; position: relative; display: flex; align-items: center; background: linear-gradient(to right, #eef1f1 0, #eef1f1 52%, #dfe3e6 68%, #c8cfd6 78%, #aab5c0 86%, #8d9aa8 100%); }
.tb-start { width: 39px; height: 30px; display: flex; align-items: center; justify-content: center; padding-right: 3px; }
.tb { width: 37px; height: 30px; display: flex; align-items: center; justify-content: center; }
.tb.on { background: linear-gradient(#9ed9a0, #9ed9a0) center bottom / 28px 2px no-repeat; }
.tb.wide { background-size: 36px 2px; }
.tbi { width: 16px; height: 16px; }
.tray { margin-left: auto; display: grid; grid-template-columns: 26px 24px 25px 22px 23px 23px 38px 42px 44px 11px; align-items: center; height: 30px; width: 278px; color: #fff; }
.tc { display: flex; align-items: center; justify-content: center; height: 30px; }
.caret-ic { width: 10px; height: 6px; transform: rotate(180deg); }
.tri { width: 16px; height: 16px; }
.t-en { font-size: 14px; }
.t-pin { width: 16px; height: 16px; background: #fff; color: #000; border: 1px solid #333; font-size: 12px; line-height: 14px; text-align: center; }
.t-time { font-size: 12px; }
.t-line { border-right: 1px solid rgba(255, 255, 255, .6); width: 6px; }
.watermark { position: absolute; left: 1638px; top: -2px; font: 15.5px/24px "Liberation Sans", sans-serif; color: rgba(255, 255, 255, .6); white-space: nowrap; }

/* context menus */
.menu { position: absolute; background: #eee; border: 1px solid #a0a0a0; padding: 4px 2px; box-shadow: 3px 3px 3px rgba(0, 0, 0, .45); color: #222; letter-spacing: .25px; }
.menu-a { left: 431px; top: 231px; width: 313px; height: 769px; }
.menu-a .mic { width: 31px; }
.menu-b { left: 738px; top: 8px; width: 302px; height: 597px; }
.mi { height: 23px; line-height: 23px; display: flex; align-items: center; white-space: nowrap; }
.mic { width: 32px; flex: none; display: flex; justify-content: center; }
.mg { width: 16px; height: 16px; }
.mg-l { width: 20px; height: 20px; }
.more { width: 8px; height: 14px; margin-left: auto; margin-right: 9px; }
.hot { background: #fff; }
.bold { font-weight: 700; }
.msep { height: 7px; padding: 3px 8px; }
.msep::before { content: ""; display: block; height: 1px; background: #a0a0a0; }
```
